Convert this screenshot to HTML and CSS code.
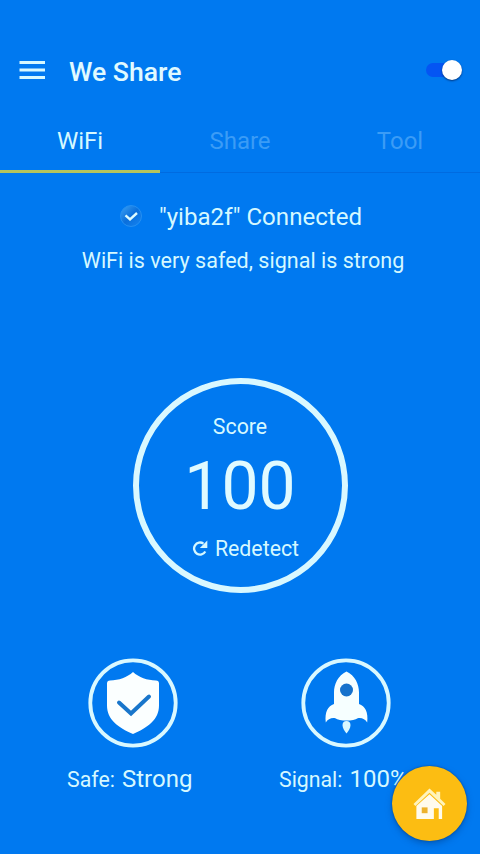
FILE: index.html
```html
<!DOCTYPE html>
<html lang="en">
<head>
<meta charset="utf-8">
<title>We Share</title>
<link rel="stylesheet" href="styles.css">
</head>
<body>
<header class="bar">
  <svg class="menu" viewBox="0 0 26 20"><path d="M.5 2.500h25.500M.5 10h25.500M.5 17.500h25.500"/></svg>
  <h1 class="title">We Share</h1>
  <div class="switch"><span class="knob"></span></div>
</header>
<nav class="tabs">
  <a class="tab active">WiFi</a>
  <a class="tab">Share</a>
  <a class="tab">Tool</a>
</nav>
<main>
  <div class="status">
    <svg class="badge" viewBox="0 0 24 24">
      <defs><linearGradient id="g" x1="0" y1="0" x2="1" y2="1"><stop offset="0" stop-color="#3fa4f5"/><stop offset=".5" stop-color="#0a6fdc"/><stop offset="1" stop-color="#1685f2"/></linearGradient></defs>
      <circle cx="12" cy="12" r="10.500" fill="url(#g)" stroke="#2590f2"/>
      <path d="M6.500 11.300l4.500 4 7-6.300" fill="none" stroke="#dcfbff" stroke-width="2.400"/>
    </svg>
    <span>"yiba2f" Connected</span>
  </div>
  <p class="summary">WiFi is very safed, signal is strong</p>
  <section class="score">
    <span class="label">Score</span>
    <span class="value">100</span>
    <span class="redo">
      <svg class="refresh" viewBox="0 0 16 16"><path d="M13.300 11.500A6 6 0 1 1 11.500 3.600" fill="none" stroke="#d5f8ff" stroke-width="2.300"/><path d="M15.300 .5v7.500H7.800l2.500-2.500 1.500-1.500z" fill="#d5f8ff"/></svg>
      <span>Redetect</span>
    </span>
  </section>
  <section class="stats">
    <div class="stat">
      <svg class="ring" viewBox="0 0 90 90">
        <circle cx="45" cy="45" r="42.700" fill="none" stroke="#d9f8ff" stroke-width="3.800"/>
        <path d="M45 14c6 5.500 14 8.300 23 8.500q3 .2 3 3v22c0 14-11 22-26 28.500C30 69.500 19 61.500 19 47.500V25.500q0-2.800 3-3c9-.2 17-3 23-8.500z" fill="#fbffff"/>
        <path d="M31 44.500L43 55.500 61 38.500" fill="none" stroke="#1976cb" stroke-width="4" stroke-linecap="round"/>
      </svg>
      <div class="caption"><span>Safe:</span><b>Strong</b></div>
    </div>
    <div class="stat">
      <svg class="ring" viewBox="0 0 90 90">
        <circle cx="45" cy="45" r="42.700" fill="none" stroke="#d9f8ff" stroke-width="3.800"/>
        <path d="M45.500 13.500C37 17.500 33 26 33 34.500v11.500C27 48 23.500 54 24.800 64.500c2-3.500 5.500-5 9.500-4.300 4 3.200 18.400 3.200 22.400 0 4-.7 7.500.8 9.500 4.300C67.500 54 64 48 58 46V34.500c0-8.500-4-17-12.500-21z" fill="#f6ffff"/>
        <circle cx="45.500" cy="32" r="6.500" fill="#1672cc"/>
        <path d="M45.500 63c2.400 0 4 1.500 4 4 0 3-2 6-4 8.500-2-2.500-4-5.500-4-8.500 0-2.500 1.600-4 4-4z" fill="#d9f8ff"/>
      </svg>
      <div class="caption"><span>Signal:</span><b>100%</b></div>
    </div>
  </section>
</main>
<button class="fab" aria-label="Home">
  <svg viewBox="0 0 34 34"><path d="M17 1.500L24 8V5h4v7l5.500 5.500-2 2L17 5.800 2.500 19.500l-2-2z" fill="#fff4bd"/><path d="M17 7.500l13 12V33H26.500V22h-5v11H3.500V19.500z" fill="#fffbed"/><path d="M9 21h6v6H9z" fill="#edb22c"/></svg>
</button>
</body>
</html>
```
FILE: styles.css
```css
* { box-sizing: border-box; }
body {
  margin: 0;
  width: 480px;
  height: 854px;
  overflow: hidden;
  background: #0079f0;
  color: #d5f8ff;
  font-family: Roboto, sans-serif;
}
.bar {
  height: 112px;
  padding: 32px 18px 0 19px;
  display: flex;
  align-items: center;
}
.menu {
  width: 26px;
  height: 20px;
  margin-top: -4px;
  fill: none;
  stroke: #d5f8ff;
  stroke-width: 2.8;
}
.title {
  margin: 0 auto 0 24px;
  font-size: 26.600px;
  line-height: 32px;
  font-weight: 500;
  color: #e0faff;
}
.switch {
  width: 36px;
  height: 14px;
  margin-top: -4px;
  border-radius: 7px;
  background: #0455f3;
  display: flex;
  align-items: center;
  justify-content: flex-end;
}
.knob {
  width: 20px;
  height: 20px;
  border-radius: 50%;
  background: #fff;
  box-shadow: 0 1px 2px #00367d;
}
.tabs {
  height: 61px;
  display: grid;
  grid-template-columns: repeat(3, 1fr);
  box-shadow: inset 0 -1px #006be0;
}
.tab {
  padding-top: 13px;
  font-size: 24px;
  line-height: 32px;
  text-align: center;
  color: #3b9cf6;
}
.active {
  color: #d5f8ff;
  border-bottom: 3px solid #b5c45c;
}
.status {
  height: 32px;
  margin-top: 28px;
  padding-left: 119px;
  display: flex;
  align-items: center;
  gap: 16px;
  font-size: 24.100px;
  line-height: 32px;
  white-space: nowrap;
}
.badge {
  width: 24px;
  height: 24px;
  margin-top: -3px;
}
.summary {
  margin: 13px 0 0;
  padding-left: 6px;
  font-size: 21.550px;
  line-height: 30px;
  text-align: center;
}
.score {
  width: 215px;
  height: 215px;
  margin: 101.500px auto 0 132.500px;
  padding-top: 30px;
  border: 6px solid #d9f8ff;
  border-radius: 50%;
  display: flex;
  flex-direction: column;
  align-items: center;
}
.label {
  font-size: 21.300px;
  line-height: 26px;
}
.value {
  margin-top: 9px;
  font-size: 66px;
  line-height: 76px;
  color: #e0faff;
}
.redo {
  margin-top: 11px;
  padding-left: 11px;
  display: flex;
  align-items: center;
  gap: 7px;
  font-size: 21.300px;
  line-height: 26px;
}
.refresh {
  width: 16px;
  height: 16px;
  margin-top: -2px;
}
.stats {
  margin: 65.500px 0 0 26px;
  display: flex;
}
.stat {
  width: 213.500px;
  display: flex;
  flex-direction: column;
  align-items: center;
}
.ring {
  width: 90px;
  height: 90px;
}
.caption {
  margin-top: 15px;
  padding-right: 6px;
  display: flex;
  align-items: baseline;
  gap: 7px;
  font-size: 21.300px;
  line-height: 32px;
}
.caption b {
  font-size: 24px;
  font-weight: 400;
}
.fab {
  position: absolute;
  left: 392px;
  top: 766px;
  width: 75px;
  height: 75px;
  padding: 0;
  border: 0;
  border-radius: 50%;
  background: #fcbd12;
  box-shadow: 0 3px 6px #00439280, 0 0 2px #004392;
  display: flex;
  align-items: center;
  justify-content: center;
}
.fab svg {
  width: 33px;
  height: 33px;
}
```
